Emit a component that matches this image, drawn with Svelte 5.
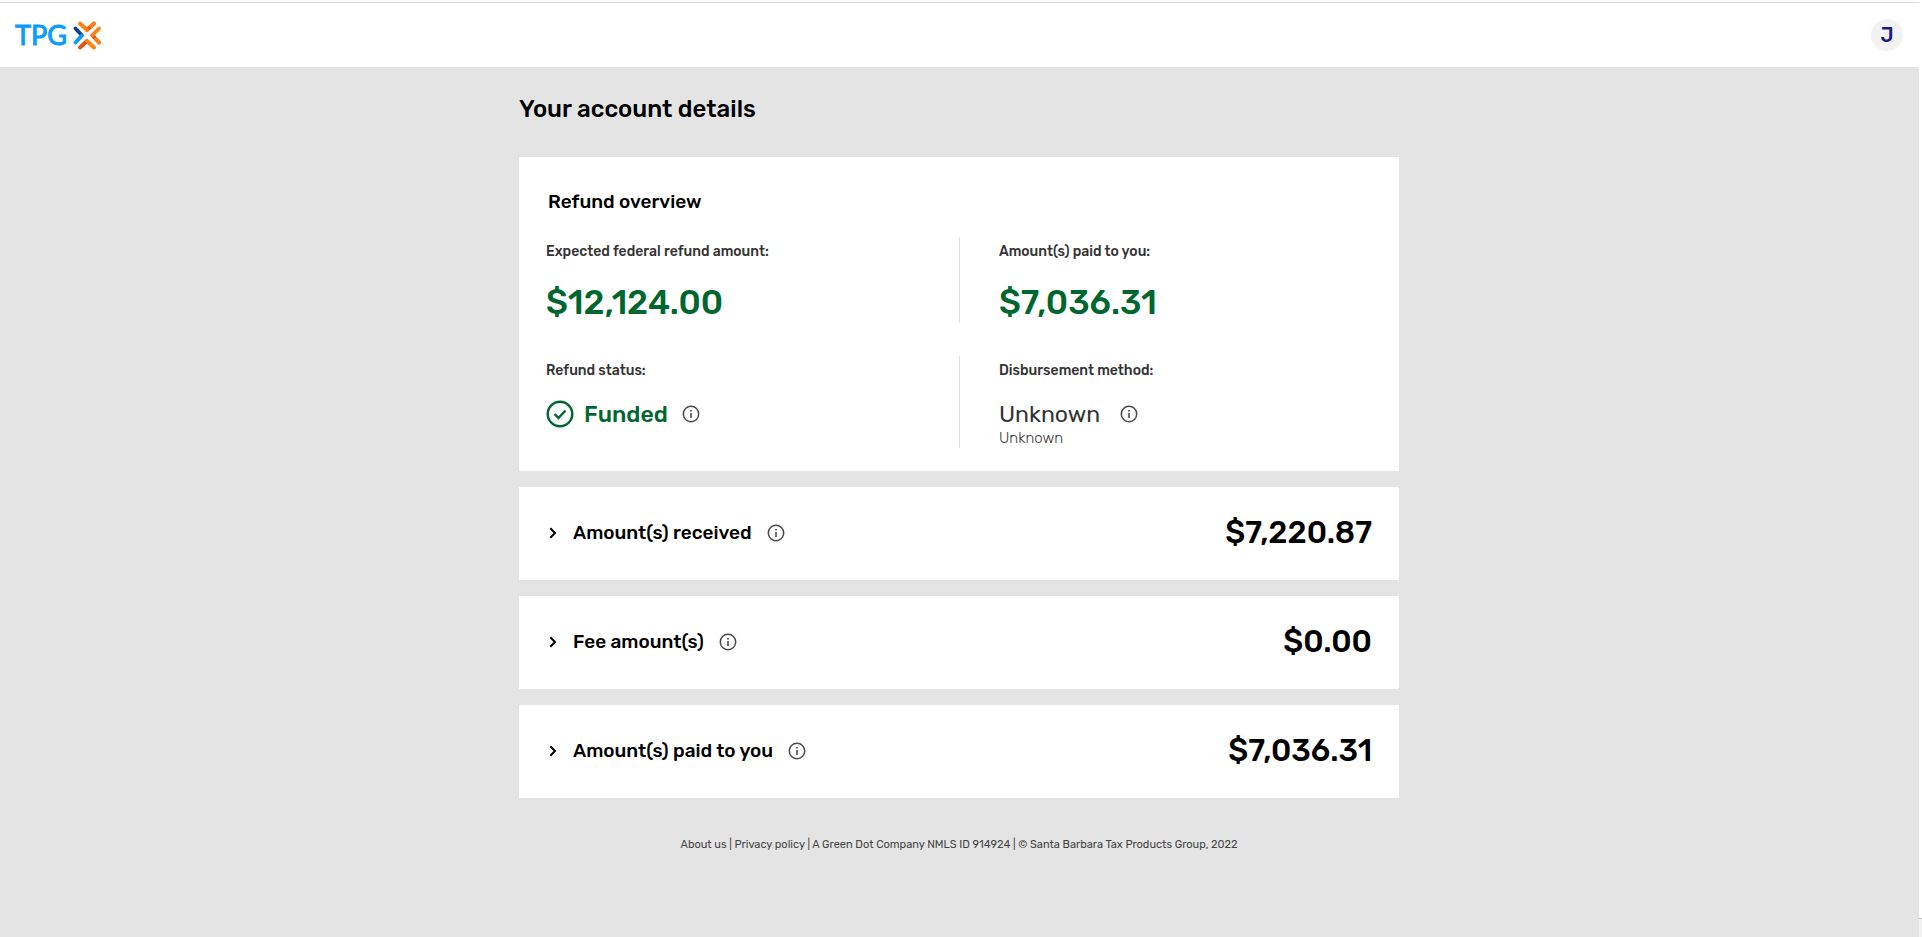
<script>
  let rows = $state([
    { title: 'Amount(s) received', amount: '$7,220.87', open: false },
    { title: 'Fee amount(s)', amount: '$0.00', open: false },
    { title: 'Amount(s) paid to you', amount: '$7,036.31', open: false }
  ]);
</script>

{#snippet info(label)}
  <button class='info' aria-label={label}>
    <svg width="18" height="18" viewBox="0 0 18 18" fill="none" stroke="#4a4a4a">
      <circle cx="9" cy="9" r="7.7" stroke-width="1.5" />
      <path d="M9 8v5" stroke-width="1.6" />
      <path d="M9 4.9v1.7" stroke-width="1.7" />
    </svg>
  </button>
{/snippet}

<div class='page'>
  <header>
    <a class='logo' href="/" aria-label="TPG home">
      <span>TPG</span>
      <svg width="28" height="30" viewBox="0 0 28 30" fill="none" stroke-width="3.8" stroke-linecap="round">
        <path d="M2.500 8.500l6 6.500" stroke="#123f91" />
        <path d="M2.500 22.500l6.500-7" stroke="#0a9bff" />
        <path d="M21 3.500L14 10" stroke="#e2501b" />
        <path d="M7 3.500l7 6.500M21 3.500l-3 2.800" stroke="#ff810f" />
        <path d="M26 22.500l-6.500-7" stroke="#e2501b" />
        <path d="M26 8.500l-6.500 6.500M26 22.500l-3-3.200" stroke="#ff810f" />
        <path d="M7 27.500l7-6.500" stroke="#e2501b" />
        <path d="M14 21l7 6.500" stroke="#ff810f" />
      </svg>
    </a>
    <button class='avatar' aria-label="Account menu">J</button>
  </header>

  <main>
    <h1>Your account details</h1>

    <section class='card overview'>
      <h2>Refund overview</h2>
      <div class='cells'>
        <div class='cell'>
          <p class='label'>Expected federal refund amount:</p>
          <p class='total'>$12,124.00</p>
        </div>
        <div class='cell'>
          <p class='label'>Amount(s) paid to you:</p>
          <p class='total'>$7,036.31</p>
        </div>
        <div class='cell'>
          <p class='label'>Refund status:</p>
          <div class='value funded'>
            <svg width="28" height="28" viewBox="0 0 28 28" fill="none" stroke="#00662f">
              <circle cx="14" cy="14" r="12.300" stroke-width="2.400" />
              <path d="M8.500 14l4 4 7-7.500" stroke-width="2.400" />
            </svg>
            <span>Funded</span>
            {@render info('About refund status')}
          </div>
        </div>
        <div class='cell'>
          <p class='label'>Disbursement method:</p>
          <div class='value method'>
            <span>Unknown</span>
            {@render info('About disbursement method')}
          </div>
          <p class='sub'>Unknown</p>
        </div>
      </div>
    </section>

    {#each rows as row}
      <section class='card row'>
        <button class='toggle' aria-expanded={row.open} onclick={() => row.open = !row.open}>
          <svg class:open={row.open} width="8" height="12" viewBox="0 0 8 12" fill="none" stroke="#000" stroke-width="2">
            <path d="M1.300 1.300L6 6l-4.700 4.700" />
          </svg>
          <span>{row.title}</span>
        </button>
        {@render info('About ' + row.title)}
        <span class='amount'>{row.amount}</span>
      </section>
    {/each}

    <footer>
      <a href="/about">About us</a> | <a href="/privacy">Privacy policy</a> | A Green Dot Company NMLS ID 914924 | © Santa Barbara Tax Products Group, 2022
    </footer>
  </main>
</div>

<div class='corner'></div>

<style>
  :global(body) {
    background: #fff;
    font-family: Rubik, Roboto, "Liberation Sans", sans-serif;
  }

  .page {
    display: flow-root;
    box-sizing: border-box;
    min-height: 100vh;
    margin-right: 3px;
    padding-right: 1px;
    background: #e4e4e4;
  }

  header {
    display: flex;
    align-items: center;
    justify-content: space-between;
    height: 64px;
    margin: 2px -1px 0 0;
    padding: 0 16px 0 15px;
    background: #fff;
    border-top: 1px solid #d8d8d8;
    box-shadow: 0 -2px #fff;
  }

  button {
    padding: 0;
    border: 0;
    background: none;
    color: inherit;
    font: inherit;
    cursor: pointer;
  }

  h1, h2, p {
    margin: 0;
    font-weight: 500;
  }

  .logo {
    display: flex;
    align-items: center;
    gap: 6px;
    color: #0a9bff;
    font: 27px/32px Lato, sans-serif;
    -webkit-text-stroke: 1px #0a9bff;
    text-decoration: none;
  }

  .avatar {
    width: 32px;
    height: 32px;
    border-radius: 50%;
    background: #f2f2f2;
    color: #1a1a80;
    font-size: 20px;
    font-weight: 500;
    line-height: 32px;
  }

  main {
    max-width: 880px;
    margin: 0 auto;
  }

  h1 {
    padding: 26px 0 32px;
    font-size: 24px;
    line-height: 32px;
  }

  .card {
    margin-bottom: 16px;
    background: #fff;
  }

  .overview {
    padding: 32px 27px 23px;
  }

  h2 {
    padding: 0 2px 22px;
    font-size: 19px;
    line-height: 26px;
  }

  .cells {
    display: grid;
    grid-template-columns: 1fr 1fr;
    row-gap: 33px;
  }

  .cell:nth-child(even) {
    padding-left: 39px;
    border-left: 1px solid #e0e0e0;
  }

  .label {
    padding-top: 4px;
    color: #333;
    font-size: 14px;
    line-height: 22px;
  }

  .total {
    padding-top: 20px;
    color: #00662f;
    font-size: 34px;
    line-height: 40px;
  }

  .value {
    display: flex;
    align-items: center;
    padding-top: 18px;
    line-height: 28px;
  }

  .funded {
    gap: 10px;
    color: #00662f;
    font-size: 23px;
    font-weight: 500;
  }

  .funded span {
    margin-right: 4px;
  }

  .method {
    gap: 20px;
    color: #333;
    font-size: 23px;
  }

  .sub {
    color: #333;
    font-size: 15px;
    line-height: 20px;
    font-weight: 300;
  }

  .info, .info svg {
    display: block;
  }

  .row {
    display: flex;
    align-items: center;
    gap: 15px;
    padding: 24px 27px 25px 30px;
  }

  .toggle {
    display: flex;
    align-items: center;
    gap: 16px;
    font-size: 19px;
    line-height: 24px;
    font-weight: 500;
  }

  .open {
    transform: rotate(90deg);
  }

  .amount {
    margin-left: auto;
    font-size: 31px;
    line-height: 44px;
    font-weight: 500;
  }

  footer {
    padding: 23px 0;
    color: #444;
    font-size: 11px;
    line-height: 16px;
    text-align: center;
  }

  footer a {
    color: inherit;
    text-decoration: none;
  }

  /* end of the scroll track, over the page edge */
  .corner {
    position: fixed;
    right: 0;
    bottom: 0;
    width: 3px;
    height: 18px;
    background: #f1f1f1;
    border-top: 1px solid #c1c1c1;
  }
</style>
